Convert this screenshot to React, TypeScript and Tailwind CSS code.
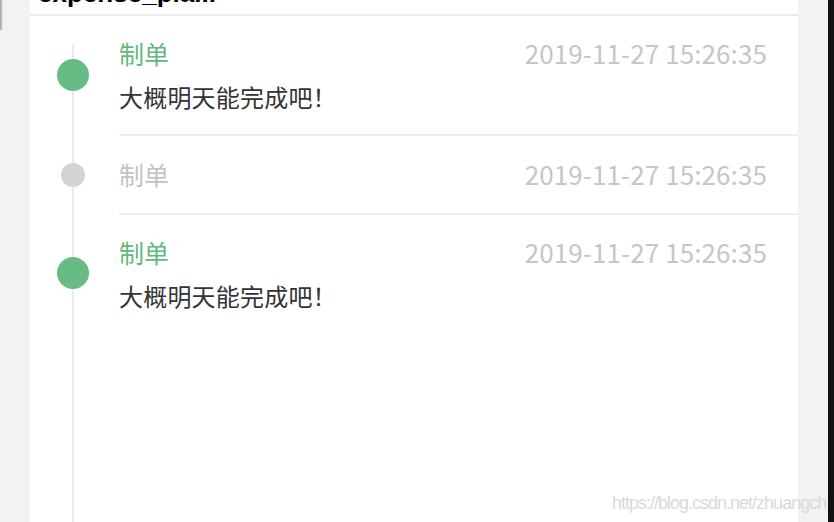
import React from 'react';

type Step = {
  title: string;
  time: string;
  note?: string;
  done: boolean;
};

const steps: Step[] = [
  { title: '制单', time: '2019-11-27 15:26:35', note: '大概明天能完成吧！', done: true },
  { title: '制单', time: '2019-11-27 15:26:35', done: false },
  { title: '制单', time: '2019-11-27 15:26:35', note: '大概明天能完成吧！', done: true },
];

const cjk = { fontFamily: '"Noto Sans CJK SC", "Noto Sans", sans-serif' };

function StepRow({ step, last }: { step: Step; last: boolean }) {
  return (
    <div className="flex items-center">
      {/* dot column */}
      <div className="w-[86px] flex justify-center shrink-0 relative z-10 -mt-[2px]">
        {step.done ? (
          <div className="w-[32px] h-[32px] rounded-full bg-[#67bb85]" />
        ) : (
          <div className="w-[24px] h-[24px] rounded-full bg-[#d4d4d4]" />
        )}
      </div>

      {/* content */}
      <div
        className={`flex-1 ml-[3px] pr-[31px] ${step.note ? 'pt-[21px] pb-[21px]' : 'pt-[22px] pb-[23px]'} ${
          last ? '' : 'border-b-2 border-[#efefef]'
        }`}
      >
        <div className="flex items-center justify-between h-[32px]">
          <span
            className={`text-[25px] leading-[32px] ${step.done ? 'text-[#5fb87e]' : 'text-[#c2c2c2]'}`}
          >
            {step.title}
          </span>
          <span className="text-[26px] leading-[32px] text-[#c6c6c6] tracking-[0.1px]">
            {step.time}
          </span>
        </div>
        {step.note && (
          <p className="mt-[12px] text-[24px] leading-[32px] text-[#333333] tracking-[0.2px]">
            {step.note}
          </p>
        )}
      </div>
    </div>
  );
}

export default function App() {
  return (
    <div
      className="w-[834px] h-[522px] bg-[#f2f2f2] flex overflow-hidden relative"
      style={cjk}
    >
      {/* phone bezel corner */}
      <div className="absolute left-0 top-0 w-[3px] h-[30px] bg-gradient-to-r from-[#9a9a9a] to-transparent" />

      <div className="w-[30px] shrink-0" />

      {/* Main panel */}
      <div className="w-[768px] shrink-0 bg-white flex flex-col">
        {/* Header (scrolled off) */}
        <div className="h-[14px] overflow-hidden relative">
          <div
            className="absolute left-[-1px] top-[-20px] text-[26px] leading-[26px] font-bold text-black whitespace-nowrap"
            style={{ fontFamily: '"Liberation Sans", Arial, sans-serif' }}
          >
            •expense_pla...
          </div>
        </div>
        <div className="h-[2px] bg-[#ececec]" />

        {/* Timeline */}
        <div className="relative flex-1">
          <div className="absolute left-[42px] top-[29px] bottom-0 w-[2px] bg-[#ebebeb]" />
          {steps.map((s, i) => (
            <StepRow key={i} step={s} last={i === steps.length - 1} />
          ))}
        </div>
      </div>

      <div className="w-[30px] shrink-0" />
      <div className="flex-1 bg-[#111]" />

      {/* watermark */}
      <div
        className="absolute left-[612px] top-[493px] text-[18px] leading-[20px] text-[#dadada] tracking-[-1px]"
        style={{ fontFamily: '"Liberation Sans", Arial, sans-serif' }}
      >
        https://blog.csdn.net/zhuangch
      </div>
    </div>
  );
}
